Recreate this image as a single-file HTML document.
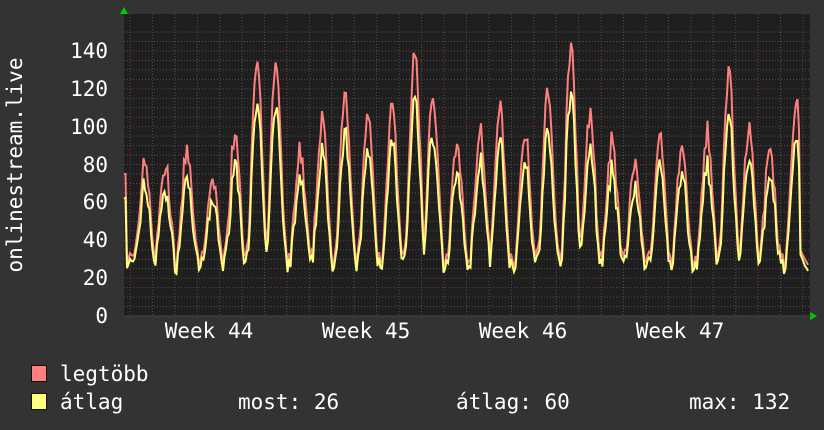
<!DOCTYPE html>
<html><head><meta charset="utf-8"><style>
html,body{margin:0;padding:0;background:#333333;}
body{width:824px;height:430px;overflow:hidden;position:relative;font-family:"DejaVu Sans Mono","Liberation Mono",monospace;color:#fff;}
.t{position:absolute;font-size:21px;line-height:1;white-space:pre;}
.sq{position:absolute;width:14px;height:15px;border:1px solid #111;}
</style></head><body>
<svg id="g" width="824" height="430" style="position:absolute;left:0;top:0">
<rect x="124" y="14" width="686" height="302" fill="#1f1f1f"/>
<g id="grid"></g>
<g id="data"></g>
<polygon points="120,14 128,14 124,7" fill="#00cc00"/>
<polygon points="810,312 810,320 817,316" fill="#00cc00"/>
<line x1="124" y1="316" x2="812" y2="316" stroke="#444" stroke-width="1"/>
<text transform="translate(22,165) rotate(-90)" text-anchor="middle" font-family="DejaVu Sans Mono,monospace" font-size="21" fill="#fff">onlinestream.live</text>
<g font-family="DejaVu Sans Mono,monospace" font-size="21" fill="#fff" text-anchor="end">
<text x="108" y="323">0</text><text x="108" y="285">20</text><text x="108" y="247">40</text><text x="108" y="209">60</text><text x="108" y="172">80</text><text x="108" y="134">100</text><text x="108" y="96">120</text><text x="108" y="58">140</text>
</g>
<g font-family="DejaVu Sans Mono,monospace" font-size="21" fill="#fff" text-anchor="middle">
<text x="209" y="338">Week 44</text><text x="366" y="338">Week 45</text><text x="523" y="338">Week 46</text><text x="680" y="338">Week 47</text>
</g>
</svg>
<div class="sq" style="left:31px;top:365px;background:#ff7f7f"></div>
<div class="sq" style="left:31px;top:393px;background:#ffff7f"></div>
<div class="t" style="left:60px;top:364px">legtöbb</div>
<div class="t" style="left:60px;top:392px">átlag</div>
<div class="t" style="left:238px;top:392px">most: 26</div>
<div class="t" style="left:456px;top:392px">átlag: 60</div>
<div class="t" style="left:689px;top:392px">max: 132</div>
<script>
var ns="http://www.w3.org/2000/svg";
var grid=document.getElementById("grid"),data=document.getElementById("data");
function ln(x1,y1,x2,y2,c){var l=document.createElementNS(ns,"line");l.setAttribute("x1",x1);l.setAttribute("y1",y1);l.setAttribute("x2",x2);l.setAttribute("y2",y2);l.setAttribute("stroke",c);l.setAttribute("stroke-dasharray","1,2");grid.appendChild(l);}
function Y(v){return 316-v*1.893;}
for(var v=5;v<=150;v+=5){var y=Y(v);if(y<14)break;ln(124,y,810,y,v%20==0?"#7a3a3a":"#505050");}
for(var x=130-22.4;x<810;x+=22.43){if(x<124)continue;var d=Math.round((x-130)/22.43);ln(x,14,x,316,d%7==0?"#7a3a3a":"#505050");}
var peaks=[[145,83],[165,80],[187,88],[213,73],[235,96],[257,134],[276,136],[300,88],[322,104],[345,115],[368,105],[392,110],[415,140],[433,118],[457,92],[480,100],[500,108],[525,100],[548,118],[571,144],[590,105],[612,93],[635,82],[660,93],[682,90],[707,97],[729,127],[749,100],[770,90],[796,115]];
var seed=7;function r(){seed=(seed*16807)%2147483647;return seed/2147483647;}
var mx=[],av=[];
for(var x=124;x<=808;x+=1.5){
 var best=null,bd=1e9;for(var i=0;i<peaks.length;i++){var dd=Math.abs(peaks[i][0]-x);if(dd<bd){bd=dd;best=peaks[i];}}
 var trough=25+r()*10;var w=Math.max(0,1-bd/11);w=w*w*(3-2*w);
 var m=trough+(best[1]-trough)*w+(r()-0.5)*14*w;
 if(x<127)m=75;
 if(x>800)m=35-(x-800);
 var a=trough-3+(m-trough)*0.8+(r()-0.5)*8*w;
 mx.push([x,m]);av.push([x,a]);}
function path(arr,c,fill){var p=document.createElementNS(ns,"polyline");p.setAttribute("points",arr.map(function(q){return q[0].toFixed(1)+","+Y(q[1]).toFixed(1)}).join(" "));p.setAttribute("fill","none");p.setAttribute("stroke",c);p.setAttribute("stroke-width","2");data.appendChild(p);}
path(mx,"#ff7f7f");path(av,"#ffff7f");
</script>
</body></html>
